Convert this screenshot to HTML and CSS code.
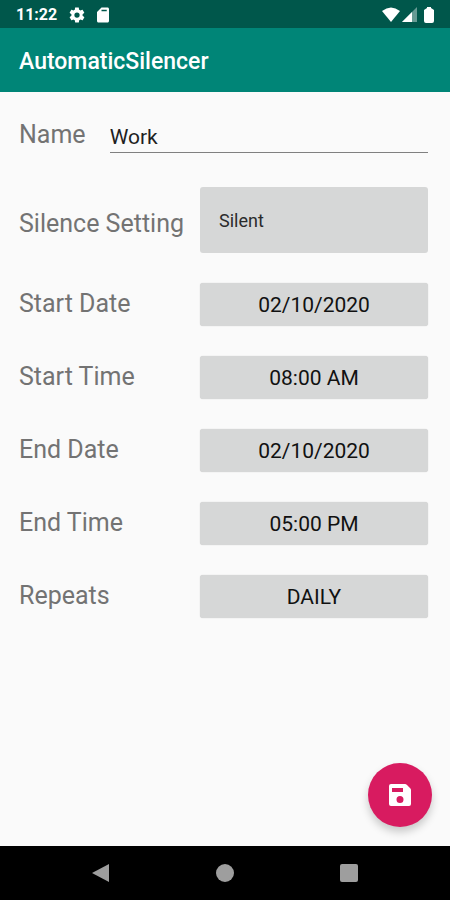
FILE: index.html
```html
<!DOCTYPE html>
<html lang="en">
<head>
<meta charset="UTF-8">
<meta name="viewport" content="width=device-width, initial-scale=1.0">
<title>AutomaticSilencer</title>
<link rel="stylesheet" href="styles.css">
</head>
<body>
  <div class="status-bar">
    <span class="clock">11:22</span>
    <svg viewBox="0 0 24 24" width="18" height="18"><path d="M19.4 13c0-.3.1-.6.1-1s0-.7-.1-1l2.1-1.6c.2-.2.3-.4.1-.7l-2-3.400c-.1-.2-.4-.3-.6-.2l-2.500 1c-.5-.4-1.100-.7-1.700-1L14.400 2.400c0-.2-.2-.4-.5-.4h-4c-.2 0-.4.2-.5.4L9.100 5.100c-.6.200-1.200.6-1.700 1l-2.500-1c-.2-.1-.5 0-.6.2l-2 3.400c-.1.300-.1.500.1.700L4.600 11c0 .3-.1.600-.1 1s0 .7.100 1l-2.200 1.600c-.2.200-.2.400-.1.700l2 3.400c.1.200.4.300.6.200l2.500-1c.5.400 1.100.7 1.700 1l.4 2.700c0 .2.200.4.500.4h4c.2 0 .5-.2.500-.4l.4-2.700c.6-.2 1.200-.6 1.700-1l2.500 1c.2.100.5 0 .6-.2l2-3.400c.1-.3.100-.5-.1-.7zM12 15.500a3.500 3.500 0 1 1 0-7 3.500 3.500 0 0 1 0 7z"/></svg>
    <svg viewBox="0 0 24 24" width="18" height="18"><path fill-rule="evenodd" d="M18 2h-8L4 8v12c0 1.100.9 2 2 2h12c1.100 0 2-.9 2-2V4c0-1.100-.9-2-2-2zM10 5v2h7V5z"/></svg>
    <div class="signals">
      <svg viewBox="0 0 20 16" width="20" height="16"><path d="M1 4Q10-3 19 4L10 15z"/></svg>
      <svg viewBox="0 0 16 16" width="16" height="16"><path d="M15 0v15H0z" opacity=".4"/><path d="M10 5v10H0z"/></svg>
      <svg class="battery" viewBox="0 0 10 16" width="10" height="16"><path d="M3 0h4v1l3 2v11q0 2-2 2H2q-2 0-2-2V3l3-2z"/></svg>
    </div>
  </div>

  <header class="app-bar">
    <h1>AutomaticSilencer</h1>
  </header>

  <main>
    <form class="form">
      <div class="name-row">
        <label for="name">Name</label>
        <input type="text" id="name" class="name-input" value="Work">
      </div>
      <div class="row">
        <label for="setting" class="setting-label">Silence Setting</label>
        <select id="setting" class="setting">
          <option>Silent</option>
        </select>
      </div>
      <div class="row">
        <label for="start-date">Start Date</label>
        <button type="button" id="start-date" class="picker">02/10/2020</button>
      </div>
      <div class="row">
        <label for="start-time">Start Time</label>
        <button type="button" id="start-time" class="picker">08:00 AM</button>
      </div>
      <div class="row">
        <label for="end-date">End Date</label>
        <button type="button" id="end-date" class="picker">02/10/2020</button>
      </div>
      <div class="row">
        <label for="end-time">End Time</label>
        <button type="button" id="end-time" class="picker">05:00 PM</button>
      </div>
      <div class="row">
        <label for="repeats">Repeats</label>
        <button type="button" id="repeats" class="picker">DAILY</button>
      </div>
    </form>
    <button type="button" class="save" aria-label="Save">
      <svg viewBox="0 0 22 22" width="22" height="22"><path fill-rule="evenodd" d="M2 0h14q1 0 2 1l3 3q1 1 1 2v14q0 2-2 2H2q-2 0-2-2V2q0-2 2-2zM3 4v4h11V4zM11 12a3.500 3.500 0 1 0 0 7 3.500 3.500 0 0 0 0-7z"/></svg>
    </button>
  </main>

  <nav class="nav-bar">
    <button type="button" aria-label="Back">
      <svg viewBox="0 0 20 20" width="20" height="20"><path d="M18 1v18L1 10z"/></svg>
    </button>
    <button type="button" aria-label="Home">
      <svg viewBox="0 0 20 20" width="20" height="20"><circle cx="10" cy="10" r="9"/></svg>
    </button>
    <button type="button" aria-label="Recent apps">
      <svg viewBox="0 0 20 20" width="20" height="20"><rect x="1" y="1" width="18" height="18" rx="2"/></svg>
    </button>
  </nav>
</body>
</html>
```
FILE: styles.css
```css
* {
  box-sizing: border-box;
}

body {
  margin: 0;
  min-height: 100vh;
  display: flex;
  flex-direction: column;
  background-color: #fafafa;
  font-family: Roboto, sans-serif;
}

svg {
  display: block;
  fill: currentColor;
}

button, input, select {
  font-family: inherit;
  border: none;
}

.status-bar {
  display: flex;
  align-items: center;
  gap: 8px;
  height: 28px;
  padding: 1px 16px 0;
  background-color: #00574b;
  color: white;
}

.clock {
  margin-right: 3px;
  font-size: 16px;
  font-weight: 700;
}

.signals {
  display: flex;
  gap: 1px;
  margin-left: auto;
}

.battery {
  margin-left: 5px;
}

.app-bar {
  display: flex;
  align-items: center;
  height: 64px;
  padding: 3px 19px 0;
  background-color: #008577;
  color: white;
}

.app-bar h1 {
  margin: 0;
  font-size: 23px;
  font-weight: 500;
}

main {
  position: relative;
  flex: 1;
}

.form {
  display: flex;
  flex-direction: column;
  gap: 30px;
  padding: 24px 22px 24px 19px;
}

.name-row {
  display: flex;
  align-items: center;
  gap: 24px;
  margin-bottom: 4px;
}

.row {
  display: grid;
  grid-template-columns: 181px 1fr;
  align-items: center;
}

label {
  font-size: 25px;
  line-height: 30px;
  color: #737373;
  white-space: nowrap;
  padding-bottom: 2px;
}

.name-row label {
  padding-bottom: 0;
}

.setting-label {
  padding-top: 10px;
}

.name-input {
  flex: 1;
  min-width: 0;
  height: 37px;
  padding: 5px 0 0;
  border-bottom: 1px solid #808080;
  background: none;
  font-size: 21px;
  color: #1f1f1f;
}

.setting {
  appearance: none;
  height: 66px;
  padding: 0 19px;
  border-radius: 3px;
  background-color: #d6d7d7;
  font-size: 18px;
  color: #2b2b2b;
}

.picker {
  height: 43px;
  padding: 0;
  border-radius: 3px;
  background-color: #d6d7d7;
  font-size: 21px;
  color: #111;
  box-shadow: 0 0 1px #c4c4c4;
}

.save {
  position: absolute;
  right: 18px;
  bottom: 19px;
  display: flex;
  align-items: center;
  justify-content: center;
  width: 64px;
  height: 64px;
  padding: 0;
  border-radius: 50%;
  background-color: #d81b60;
  color: white;
  box-shadow: 0 5px 9px rgba(0, 0, 0, 0.2);
}

.nav-bar {
  display: flex;
  align-items: center;
  justify-content: center;
  gap: 104px;
  height: 54px;
  background-color: black;
}

.nav-bar button {
  padding: 0;
  background: none;
  color: #9e9e9e;
}
```
